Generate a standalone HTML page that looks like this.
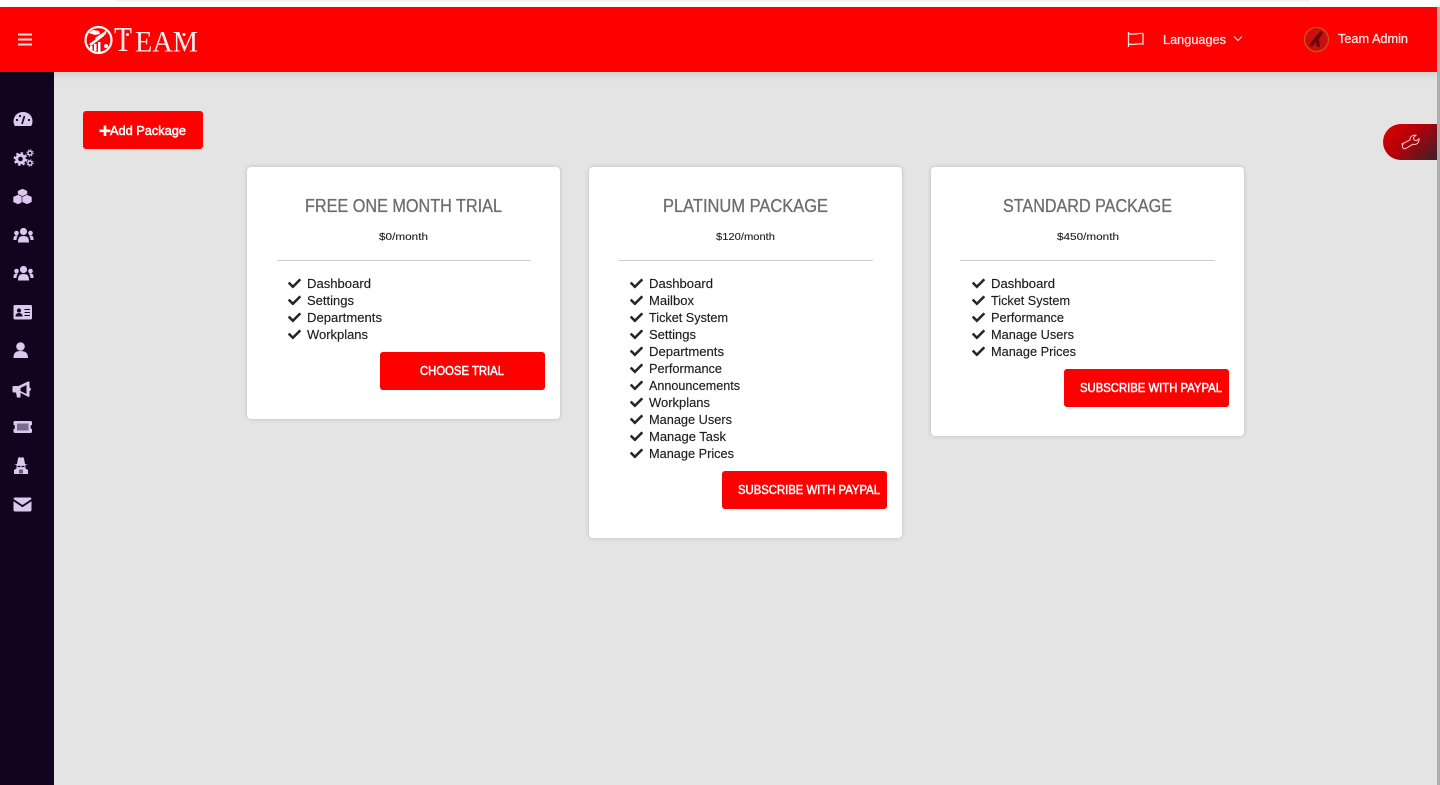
<!DOCTYPE html>
<html><head><meta charset="utf-8"><title>Packages</title>
<style>
html,body{margin:0;padding:0;width:1440px;height:785px;overflow:hidden;background:#e4e4e4}
div{position:absolute;box-sizing:border-box}
svg{position:absolute;left:0;top:0}
text{font-family:"Liberation Sans",sans-serif}
.card{background:#fff;border-radius:4px;box-shadow:0 0 4px rgba(0,0,0,.18)}
.li{font-size:13px;fill:#1d1d1d;stroke:#1d1d1d;stroke-width:.15px}
.t{font-size:18px;fill:#6d6d6d;stroke:#6d6d6d;stroke-width:.3px}
.p{font-size:10.5px;fill:#1d1d1d;stroke:#1d1d1d;stroke-width:.1px}
.b{font-size:12.5px;fill:#fff;stroke:#fff;stroke-width:.5px}
.s{fill:#dcc8ee}
</style></head><body>
<div style="left:0;top:0;width:1440px;height:7px;background:#fff"></div>
<div style="left:115px;top:0;width:1195px;height:2px;background:#f3f3f5;border-radius:0 0 4px 4px"></div>
<div style="left:0;top:7px;width:1437px;height:65px;background:#f00;box-shadow:0 3px 8px rgba(0,0,0,.1)"></div>
<div style="left:0;top:72px;width:54px;height:713px;background:#12041f"></div>
<div style="left:1437px;top:7px;width:3px;height:778px;background:#aeaeae"></div>
<div style="left:83px;top:111px;width:120px;height:38px;background:#f00;border-radius:3px"></div>
<div class="card" style="left:247px;top:167px;width:313px;height:252px"></div>
<div class="card" style="left:589px;top:167px;width:313px;height:371px"></div>
<div class="card" style="left:931px;top:167px;width:313px;height:269px"></div>
<div style="left:380px;top:352px;width:165px;height:38px;background:#f00;border-radius:3px"></div>
<div style="left:722px;top:471px;width:165px;height:38px;background:#f00;border-radius:3px"></div>
<div style="left:1064px;top:369px;width:165px;height:38px;background:#f00;border-radius:3px"></div>
<div style="left:277px;top:260px;width:254px;height:1px;background:#cfcfcf"></div>
<div style="left:618px;top:260px;width:255px;height:1px;background:#cfcfcf"></div>
<div style="left:960px;top:260px;width:255px;height:1px;background:#cfcfcf"></div>
<div style="left:1383px;top:124px;width:54px;height:36px;border-radius:18px 0 0 18px;background:linear-gradient(135deg,#e00000 0%,#b30008 45%,#3a2228 100%)"></div>

<svg width="1440" height="785" viewBox="0 0 1440 785" xmlns="http://www.w3.org/2000/svg">
<defs>
<path id="ck" transform="scale(.0254)" fill="#262626" d="M173.898 439.404l-166.4-166.4c-9.997-9.997-9.997-26.206 0-36.204l36.203-36.204c9.997-9.998 26.207-9.998 36.204 0L192 312.69 432.095 72.596c9.997-9.997 26.207-9.997 36.204 0l36.203 36.204c9.997 9.997 9.997 26.206 0 36.204l-294.4 294.401c-9.998 9.997-26.207 9.997-36.204-.001z"/>
<g id="us" class="s">
<circle cx="0" cy="-4" r="3.6"/><path d="M-5.5 7c0-5 1.5-6.500 5.500-6.500S5.500 2 5.500 7z"/>
<circle cx="-7" cy="-2.500" r="2.300"/><circle cx="7" cy="-2.500" r="2.300"/>
<path d="M-10 3.500c0-2.500 1-3.500 3-3.500 1 0 1.500.3 1.500.3C-6.500 1.500-7 2.500-7 4.500h-3zM10 3.500c0-2.500-1-3.500-3-3.500-1 0-1.500.3-1.500.3 1 1.200 1.500 2.200 1.500 4.200h3z"/>
</g>
</defs>

<!-- header -->
<g stroke="#ffdcdc" stroke-width="2"><path d="M18 34.500h14M18 39.500h14M18 44.500h14"/></g>
<circle cx="98.500" cy="40" r="13" fill="none" stroke="#fff" stroke-width="2.200"/>
<path d="M89 33l4-3 6 1 1 3-5 1zM95 38l9-6 3-3-1 5-9 7z" fill="#fff"/>
<path d="M90 50v-4h2.500v4zM94 51v-7h2.500v7zM98 52v-10h2.500v10zM89 44l14-10 1 2-13 10z" fill="#fff"/>
<circle cx="106" cy="46" r="2" fill="#fff"/>
<text x="114" y="51" font-size="35" fill="#fff" fill-opacity=".92" textLength="18" lengthAdjust="spacingAndGlyphs" style="font-family:'Liberation Serif',serif">T</text>
<text x="135" y="51.500" font-size="30" fill="#fff" fill-opacity=".92" textLength="63" lengthAdjust="spacingAndGlyphs" style="font-family:'Liberation Serif',serif">EAM</text>
<circle cx="127.500" cy="34.500" r="1.500" fill="#fff"/><circle cx="184" cy="34.500" r="1.500" fill="#fff"/>
<path d="M1128.500 47V32M1128.500 33.500c5 2 9-.8 14.500 0v10.500c-5.500-1-9.500 1.500-14.500 0" fill="none" stroke="#ffdede" stroke-width="1.300"/>
<text x="1163" y="44" font-size="12.500" fill="#ffe3e3" stroke="#ffe3e3" stroke-width=".25" textLength="63" lengthAdjust="spacingAndGlyphs">Languages</text>
<path d="M1234 36.500l4 4 4-4" fill="none" stroke="#ffdede" stroke-width="1.100"/>
<circle cx="1316.500" cy="39.500" r="12" fill="#c81010"/>
<circle cx="1316.500" cy="39.500" r="12" fill="none" stroke="#d8500f" stroke-width="1.300"/>
<path d="M1309 45l8-10 4-4 2 2-4 6 1 8h-3l-1-5-4 5z" fill="#6a0808"/>
<text x="1338" y="43" font-size="12.500" fill="#ffe8e8" stroke="#ffe8e8" stroke-width=".25" textLength="70" lengthAdjust="spacingAndGlyphs">Team Admin</text>
<path d="M1402 144l8-4c-.5-3 2.500-5.500 6-4.800l-2.500 2.300.5 2.500 2.500.7 2.500-2c.5 4-2.500 6.500-6 5.500l-7.500 4.500c-2.500 1-4-2.500-2.500-4.200z" fill="none" stroke="#ffc9c9" stroke-width="1"/>

<!-- sidebar icons -->
<path class="s" d="M23 112c-5.500 0-9.500 4-9.500 9.300 0 1.800.5 3.300 1.300 4.700h16.400c.8-1.400 1.300-2.900 1.300-4.700 0-5.300-4-9.300-9.500-9.300z"/>
<path d="M22 124l2.500-8" stroke="#12041f" stroke-width="1.600"/><circle cx="17" cy="120" r="1.100" fill="#12041f"/><circle cx="20" cy="116" r="1.100" fill="#12041f"/><circle cx="29" cy="120" r="1.100" fill="#12041f"/>

<circle cx="20.500" cy="159" r="3.800" fill="none" stroke="#dcc8ee" stroke-width="3"/><circle cx="20.500" cy="159" r="6" fill="none" stroke="#dcc8ee" stroke-width="1.800" stroke-dasharray="2.500 2.200"/>
<circle cx="30" cy="153" r="2" fill="none" stroke="#dcc8ee" stroke-width="1.400"/><circle cx="30" cy="153" r="3.200" fill="none" stroke="#dcc8ee" stroke-width=".9" stroke-dasharray="1.200 1.300"/>
<circle cx="30" cy="163" r="2" fill="none" stroke="#dcc8ee" stroke-width="1.400"/><circle cx="30" cy="163" r="3.200" fill="none" stroke="#dcc8ee" stroke-width=".9" stroke-dasharray="1.200 1.300"/>

<g stroke="#12041f" stroke-width=".6">
<path class="s" d="M22.500 188.500l5 2.200v5.500l-5 2.300-5-2.300v-5.500z"/>
<path class="s" d="M18 194.500l5 2.200v5.500l-5 2.300-5-2.300v-5.500z"/>
<path class="s" d="M27 194.500l5 2.200v5.500l-5 2.300-5-2.300v-5.500z"/>
</g>

<use href="#us" x="23.500" y="235.500"/>
<use href="#us" x="23.500" y="273.500"/>

<rect x="13.500" y="305" width="18.500" height="14.500" rx="1.500" class="s"/>
<circle cx="19" cy="310.500" r="2" fill="#12041f"/><path d="M15.500 316.500c0-2.500 1.500-3.500 3.500-3.500s3.500 1 3.500 3.500z" fill="#12041f"/><path d="M24.500 309.500h5.500M24.500 312.500h5.500M24.500 315.500h5.500" stroke="#12041f" stroke-width="1.100"/>

<circle cx="20.500" cy="346.500" r="4.300" class="s"/><path class="s" d="M13.500 358c0-5.500 2.500-7 7-7s7.500 1.500 7.500 7z"/>

<path class="s" d="M13.500 386h5l9.500-4.500h.8c.5 0 .7.200.7.700v5.300c1 .4 1.500 1 1.500 1.700s-.5 1.500-1.500 1.700v5.100c0 .6-.2.800-.7.800h-.8l-7.500-4v4.700h-3.500l-1-5h-2.500c-.6 0-1-.4-1-1v-4.500c0-.600.400-1 1-1z"/>
<path d="M20.500 388l6-3v9l-6-3z" fill="#12041f"/>

<rect x="13.500" y="421" width="18.500" height="12" rx="1.500" class="s"/><rect x="12.800" y="425" width="2" height="4" rx="1" fill="#12041f"/><rect x="30.700" y="425" width="2" height="4" rx="1" fill="#12041f"/><rect x="17" y="423.500" width="11.500" height="7" fill="#7d6a92"/>

<path class="s" d="M17 464l1-5.500q.3-1.500 1.800-1.200l1.200.5 1.200-.5q1.500-.3 1.800 1.200l1 5.500 3 1H14z"/>
<path class="s" d="M16.500 465h9v3.500l2.500 1.500v4H14v-4l2.500-1.500z"/>
<path d="M17.500 466.500h3M21.500 466.500h3" stroke="#12041f" stroke-width="1.300"/><path d="M20 469.500v4M22 469.500v4" stroke="#12041f" stroke-width="1.100"/>

<path class="s" d="M13.500 499c0-.8.600-1.500 1.500-1.500h15c.9 0 1.500.7 1.500 1.500l-9 6z"/><path class="s" d="M13.500 501.200l9 6 9-6v8.800c0 .8-.6 1.500-1.500 1.500H15c-.9 0-1.500-.7-1.500-1.500z"/>

<!-- add -->
<path d="M105 125.500v10.500M99.500 130.800h11" stroke="#fff" stroke-width="2.600"/>
<text x="110" y="135" class="b" textLength="76" lengthAdjust="spacingAndGlyphs">Add Package</text>

<!-- card 1 -->
<text x="305" y="212" class="t" textLength="197" lengthAdjust="spacingAndGlyphs">FREE ONE MONTH TRIAL</text>
<text x="379" y="240" class="p" textLength="49" lengthAdjust="spacingAndGlyphs">$0/month</text>
<use href="#ck" x="288" y="277"/><text x="307" y="288" class="li" textLength="64" lengthAdjust="spacingAndGlyphs">Dashboard</text>
<use href="#ck" x="288" y="294"/><text x="307" y="305" class="li" textLength="47" lengthAdjust="spacingAndGlyphs">Settings</text>
<use href="#ck" x="288" y="311"/><text x="307" y="322" class="li" textLength="75" lengthAdjust="spacingAndGlyphs">Departments</text>
<use href="#ck" x="288" y="328"/><text x="307" y="339" class="li" textLength="61" lengthAdjust="spacingAndGlyphs">Workplans</text>
<text x="420" y="375" class="b" textLength="84" lengthAdjust="spacingAndGlyphs">CHOOSE TRIAL</text>

<!-- card 2 -->
<text x="663" y="212" class="t" textLength="165" lengthAdjust="spacingAndGlyphs">PLATINUM PACKAGE</text>
<text x="716" y="240" class="p" textLength="59" lengthAdjust="spacingAndGlyphs">$120/month</text>
<use href="#ck" x="630" y="277"/><text x="649" y="288" class="li" textLength="64" lengthAdjust="spacingAndGlyphs">Dashboard</text>
<use href="#ck" x="630" y="294"/><text x="649" y="305" class="li" textLength="45" lengthAdjust="spacingAndGlyphs">Mailbox</text>
<use href="#ck" x="630" y="311"/><text x="649" y="322" class="li" textLength="79" lengthAdjust="spacingAndGlyphs">Ticket System</text>
<use href="#ck" x="630" y="328"/><text x="649" y="339" class="li" textLength="47" lengthAdjust="spacingAndGlyphs">Settings</text>
<use href="#ck" x="630" y="345"/><text x="649" y="356" class="li" textLength="75" lengthAdjust="spacingAndGlyphs">Departments</text>
<use href="#ck" x="630" y="362"/><text x="649" y="373" class="li" textLength="73" lengthAdjust="spacingAndGlyphs">Performance</text>
<use href="#ck" x="630" y="379"/><text x="649" y="390" class="li" textLength="91" lengthAdjust="spacingAndGlyphs">Announcements</text>
<use href="#ck" x="630" y="396"/><text x="649" y="407" class="li" textLength="61" lengthAdjust="spacingAndGlyphs">Workplans</text>
<use href="#ck" x="630" y="413"/><text x="649" y="424" class="li" textLength="83" lengthAdjust="spacingAndGlyphs">Manage Users</text>
<use href="#ck" x="630" y="430"/><text x="649" y="441" class="li" textLength="77" lengthAdjust="spacingAndGlyphs">Manage Task</text>
<use href="#ck" x="630" y="447"/><text x="649" y="458" class="li" textLength="85" lengthAdjust="spacingAndGlyphs">Manage Prices</text>
<text x="738" y="494" class="b" textLength="142" lengthAdjust="spacingAndGlyphs">SUBSCRIBE WITH PAYPAL</text>

<!-- card 3 -->
<text x="1003" y="212" class="t" textLength="169" lengthAdjust="spacingAndGlyphs">STANDARD PACKAGE</text>
<text x="1057" y="240" class="p" textLength="62" lengthAdjust="spacingAndGlyphs">$450/month</text>
<use href="#ck" x="972" y="277"/><text x="991" y="288" class="li" textLength="64" lengthAdjust="spacingAndGlyphs">Dashboard</text>
<use href="#ck" x="972" y="294"/><text x="991" y="305" class="li" textLength="79" lengthAdjust="spacingAndGlyphs">Ticket System</text>
<use href="#ck" x="972" y="311"/><text x="991" y="322" class="li" textLength="73" lengthAdjust="spacingAndGlyphs">Performance</text>
<use href="#ck" x="972" y="328"/><text x="991" y="339" class="li" textLength="83" lengthAdjust="spacingAndGlyphs">Manage Users</text>
<use href="#ck" x="972" y="345"/><text x="991" y="356" class="li" textLength="85" lengthAdjust="spacingAndGlyphs">Manage Prices</text>
<text x="1080" y="392" class="b" textLength="142" lengthAdjust="spacingAndGlyphs">SUBSCRIBE WITH PAYPAL</text>
</svg>
</body></html>
